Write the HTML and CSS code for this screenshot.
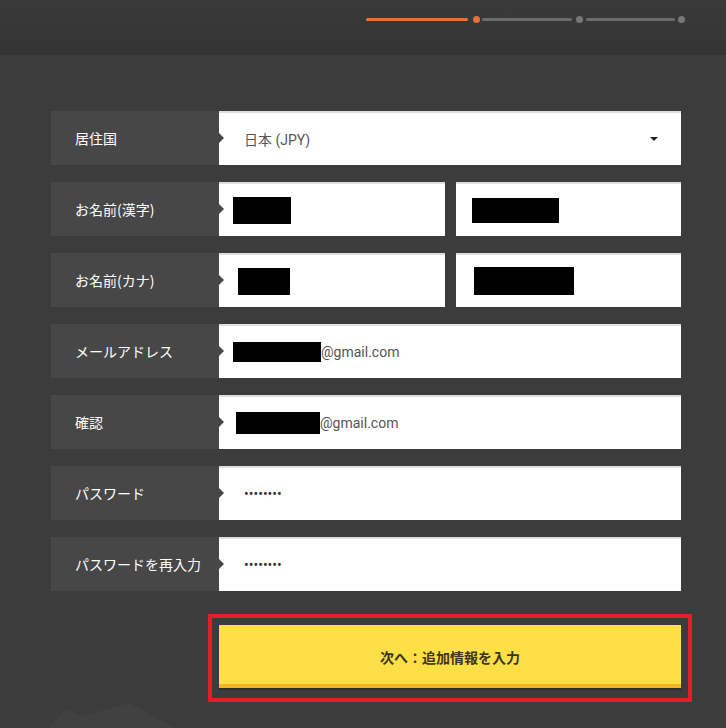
FILE: index.html
```html
<!DOCTYPE html>
<html lang="ja">
<head>
<meta charset="utf-8">
<link rel="stylesheet" href="styles.css">
</head>
<body>
<header class="top">
  <div class="progress">
    <span class="line done l1"></span>
    <span class="dot done"></span>
    <span class="line l2"></span>
    <span class="dot"></span>
    <span class="line l3"></span>
    <span class="dot"></span>
  </div>
</header>
<main class="form">
  <div class="row">
    <div class="label">居住国</div>
    <div class="field select">
      <span class="val">日本 (JPY)</span>
      <span class="caret"></span>
    </div>
  </div>
  <div class="row">
    <div class="label">お名前(漢字)</div>
    <div class="pair">
      <div class="field half"><span class="redact r2a"></span></div>
      <div class="field half"><span class="redact r2b"></span></div>
    </div>
  </div>
  <div class="row">
    <div class="label">お名前(カナ)</div>
    <div class="pair">
      <div class="field half"><span class="redact r3a"></span></div>
      <div class="field half"><span class="redact r3b"></span></div>
    </div>
  </div>
  <div class="row">
    <div class="label">メールアドレス</div>
    <div class="field"><span class="redact r4"></span><span class="val tight">@gmail.com</span></div>
  </div>
  <div class="row">
    <div class="label">確認</div>
    <div class="field"><span class="redact r5"></span><span class="val tight">@gmail.com</span></div>
  </div>
  <div class="row">
    <div class="label">パスワード</div>
    <div class="field"><span class="pw">••••••••</span></div>
  </div>
  <div class="row">
    <div class="label">パスワードを再入力</div>
    <div class="field"><span class="pw">••••••••</span></div>
  </div>
  <div class="btn-wrap">
    <button class="next">次へ：追加情報を入力</button>
  </div>
</main>
<svg class="hills" width="160" height="28" viewBox="0 0 160 28">
  <path d="M18 28 L36 9 L52 16 L100 3 L145 28 Z" fill="#414141"/>
</svg>
</body>
</html>
```
FILE: styles.css
```css
html, body {
  margin: 0;
  padding: 0;
}
body {
  width: 726px;
  height: 728px;
  overflow: hidden;
  background: #3c3c3c;
  font-family: Roboto, "Noto Sans CJK JP", sans-serif;
  position: relative;
}
.top {
  height: 55px;
  background: linear-gradient(#3a3a3a, #343434);
  display: flex;
  justify-content: flex-end;
  align-items: flex-start;
  padding-right: 41px;
  box-sizing: border-box;
}
.progress {
  display: flex;
  align-items: center;
  margin-top: 16px;
}
.line {
  display: block;
  height: 3px;
  background: #6b6b6b;
  border-radius: 2px;
}
.line.done { background: #e8703a; }
.l1 { width: 102px; margin-right: 5px; }
.l2 { width: 90px; margin: 0 4px 0 2px; }
.l3 { width: 89px; margin: 0 3px 0 3px; }
.dot {
  display: block;
  width: 7px;
  height: 7px;
  border-radius: 50%;
  background: #777;
}
.dot.done { background: #e8703a; }

.form {
  padding: 56px 0 0 51px;
  width: 630px;
  display: flex;
  flex-direction: column;
  gap: 17px;
}
.row {
  display: flex;
  height: 54px;
}
.label {
  width: 168px;
  flex: none;
  background: #474747;
  color: #fff;
  font-family: "Noto Sans CJK JP", sans-serif;
  font-size: 14px;
  display: flex;
  align-items: center;
  padding-left: 24px;
  padding-bottom: 1px;
  box-sizing: border-box;
  position: relative;
}
.label::after {
  content: "";
  position: absolute;
  right: -5px;
  top: 22px;
  border-left: 5px solid #474747;
  border-top: 5px solid transparent;
  border-bottom: 5px solid transparent;
}
.field {
  flex: 1;
  background: #fff;
  border-top: 2px solid #dedede;
  box-sizing: border-box;
  display: flex;
  align-items: center;
  padding-left: 14px;
  font-size: 14px;
  color: #555;
}
.select {
  padding-left: 25px;
  padding-right: 23px;
  justify-content: space-between;
}
.caret {
  width: 0;
  height: 0;
  border-top: 4px solid #222;
  border-left: 4px solid transparent;
  border-right: 4px solid transparent;
}
.pair {
  flex: 1;
  display: flex;
  gap: 11px;
}
.half { padding-left: 0; }
.redact {
  display: block;
  background: #000;
  flex: none;
}
.r2a { width: 58px; height: 27px; margin-left: 14px; }
.r2b { width: 87px; height: 25px; margin-left: 16px; }
.r3a { width: 52px; height: 27px; margin-left: 19px; }
.r3b { width: 100px; height: 28px; margin-left: 18px; }
.r4 { width: 88px; height: 20px; }
.r5 { width: 84px; height: 22px; margin-left: 3px; }
.val.tight { margin-left: 0; }
.pw {
  font-family: Roboto, sans-serif;
  font-size: 14px;
  color: #333;
  letter-spacing: 0;
  margin-left: 11px;
}
.btn-wrap {
  margin: 6px 0 0 157px;
  width: 484px;
  height: 88px;
  border: 4px solid #e31e26;
  box-sizing: border-box;
  padding: 7px 7px 10px;
}
.next {
  display: block;
  width: 100%;
  height: 63px;
  border: none;
  background: #ffdf46;
  box-shadow: inset 0 -4px 0 #f2b524, 0 2px 0 #2e2e2e;
  font-family: "Noto Sans CJK JP", sans-serif;
  font-weight: bold;
  font-size: 14px;
  color: #3b3522;
  padding: 0;
}
.hills {
  position: absolute;
  left: 30px;
  bottom: 0;
}
```
